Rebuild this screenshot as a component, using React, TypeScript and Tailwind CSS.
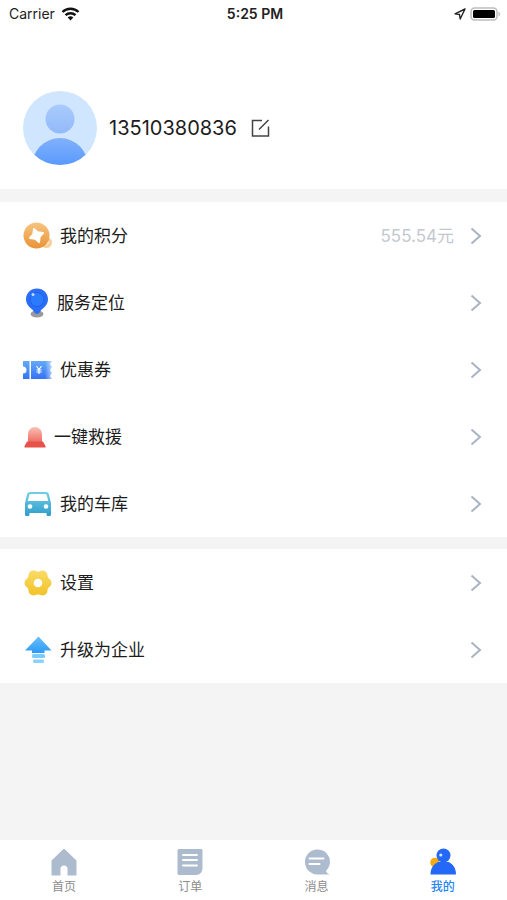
import type { ReactNode } from "react";

const CoinIcon = () => (
  <svg className="w-[29px] h-7" viewBox="0 0 29 28" aria-hidden="true">
    <defs>
      <linearGradient id="coin" x1="0" y1="0" x2="0" y2="1">
        <stop offset="0" stopColor="#f6c580" />
        <stop offset="1" stopColor="#ea9236" />
      </linearGradient>
    </defs>
    <circle cx="23.5" cy="20.5" r="5.5" fill="#f8cf98" />
    <path d="M23.5 17.5l1.2 2.2 2.3 1-2.3 1.1-1.2 2.2z" fill="#fdf0dc" />
    <circle cx="13.5" cy="13.5" r="13" fill="url(#coin)" />
    <path
      d="M11 7L14.700 10.300L20 11L16.700 14.700L16 20L12.300 16.700L7 16L10.300 12.300z"
      fill="#fff"
      stroke="#fff"
      strokeWidth="2"
      strokeLinejoin="round"
    />
  </svg>
);

const PinIcon = () => (
  <svg className="w-[26px] h-[30px]" viewBox="0 0 26 30" aria-hidden="true">
    <ellipse cx="14" cy="26" rx="6.500" ry="3.500" fill="#9a9a9d" />
    <path
      d="M14 .5C7.800.5 3 5.200 3 11.200c0 4.800 3.200 7.800 6.200 10.300 1.700 1.400 2.300 4.500 4.800 4.500s3.100-3.100 4.800-4.500C21.800 19 25 16 25 11.200 25 5.200 20.200.5 14 .5z"
      fill="#2c6df8"
    />
    <circle cx="14" cy="11.500" r="7" fill="#2a7bfd" stroke="#1f60ee" />
    <circle cx="10" cy="6.500" r="1.500" fill="#c3dcff" />
  </svg>
);

const CouponIcon = () => (
  <svg className="w-[29px] h-[18px]" viewBox="0 0 29 18" aria-hidden="true">
    <defs>
      <linearGradient id="coupon" x1="0" y1="0" x2="0" y2="1">
        <stop offset="0" stopColor="#63aaf9" />
        <stop offset="1" stopColor="#3473f7" />
      </linearGradient>
      <linearGradient id="couponEdge" x1="0" y1="0" x2="1" y2="0">
        <stop offset="0" stopColor="#fff" stopOpacity="0" />
        <stop offset="1" stopColor="#fff" stopOpacity=".6" />
      </linearGradient>
    </defs>
    <path
      d="M0 0h6.500v18H0v-5.500a3.500 3.500 0 0 0 0-7zM8 0h21l-2 3 2 3-2 3 2 3-2 3 2 3H8z"
      fill="url(#coupon)"
    />
    <path d="M22 0h7v18h-7z" fill="url(#couponEdge)" />
    <path
      d="M13.500 5l2.500 3.500L18.500 5M16 8.500V13M13.500 9h5M13.500 11h5"
      fill="none"
      stroke="#fff"
      strokeWidth="1.200"
    />
  </svg>
);

const SirenIcon = () => (
  <svg className="w-[23px] h-[22px]" viewBox="0 0 23 22" aria-hidden="true">
    <defs>
      <linearGradient id="siren" x1="0" y1="0" x2="0" y2="1">
        <stop offset="0" stopColor="#fbc1b5" />
        <stop offset="1" stopColor="#ee6d63" />
      </linearGradient>
    </defs>
    <path d="M5 16V8a7 7 0 0 1 14 0v8z" fill="url(#siren)" />
    <path d="M4 15.500h16l2.500 4.500v1.500h-21V20z" fill="#e9524b" />
  </svg>
);

const CarIcon = () => (
  <svg className="w-[29px] h-6" viewBox="0 0 29 24" aria-hidden="true">
    <defs>
      <linearGradient id="car" x1="0" y1="0" x2="0" y2="1">
        <stop offset="0" stopColor="#72cfe9" />
        <stop offset="1" stopColor="#2f9dc9" />
      </linearGradient>
    </defs>
    <path
      d="M7 0h16c1.500 0 2.500.8 2.800 2L28 11v11.500c0 .8-.5 1.500-1.300 1.500h-1.900c-.8 0-1.300-.7-1.300-1.500V21h-17v1.500c0 .8-.5 1.500-1.300 1.500H3.300C2.500 24 2 23.300 2 22.500V11L4.200 2C4.500.8 5.500 0 7 0z"
      fill="url(#car)"
    />
    <path d="M7.500 2h15c.6 0 1 .3 1.200.9L25.300 9H4.700l1.600-6.100c.2-.6.600-.9 1.200-.9z" fill="#fff" />
    <circle cx="7" cy="14.500" r="2.300" fill="#fff" />
    <circle cx="23" cy="14.500" r="2.300" fill="#fff" />
  </svg>
);

const SettingsIcon = () => (
  <svg className="w-[29px] h-[26px]" viewBox="0 0 29 26" aria-hidden="true">
    <defs>
      <linearGradient id="gear" gradientUnits="userSpaceOnUse" x1="0" y1="0" x2="0" y2="26">
        <stop offset="0" stopColor="#f9dc68" />
        <stop offset="1" stopColor="#f2c124" />
      </linearGradient>
    </defs>
    <g fill="url(#gear)">
      <circle cx="15" cy="13" r="11.500" />
      <circle cx="23.500" cy="13" r="5" />
      <circle cx="19.500" cy="5.500" r="5" />
      <circle cx="10.500" cy="5.500" r="5" />
      <circle cx="6.500" cy="13" r="5" />
      <circle cx="10.500" cy="20.500" r="5" />
      <circle cx="19.500" cy="20.500" r="5" />
    </g>
    <circle cx="15" cy="13" r="4.300" fill="#fff" />
  </svg>
);

const UpgradeIcon = () => (
  <svg className="w-[29px] h-7" viewBox="0 0 29 28" aria-hidden="true">
    <defs>
      <linearGradient id="upgrade" x1="0" y1="0" x2="0" y2="1">
        <stop offset="0" stopColor="#68bffb" />
        <stop offset="1" stopColor="#2a9bf6" />
      </linearGradient>
    </defs>
    <path d="M15.500.5L28.500 14.500H21.500V17h-12.500v-2.500H2z" fill="url(#upgrade)" />
    <rect x="9" y="18" width="13" height="4" rx="1.500" fill="#7ccbfc" />
    <rect x="10" y="23.500" width="11" height="3.500" rx="1.500" fill="#8ad2fd" />
  </svg>
);

const HomeIcon = () => (
  <svg className="w-[26px] h-7" viewBox="0 0 26 28" aria-hidden="true">
    <path
      d="M13 .5l12.500 12v15h-9V21a3.500 3.500 0 0 0-7 0v6.500H.5v-15z"
      fill="#adbbcf"
    />
  </svg>
);

const OrderIcon = () => (
  <svg className="w-[26px] h-7" viewBox="0 0 26 28" aria-hidden="true">
    <path
      d="M2 1h22c.8 0 1.500.7 1.500 1.500V20c0 4-2.500 7-6.500 7H2c-.8 0-1.500-.7-1.500-1.500v-23C.5 1.700 1.200 1 2 1z"
      fill="#adbbcf"
    />
    <path
      d="M6 7h14M6 12h14M6 17.500h14"
      stroke="#fff"
      strokeWidth="2"
      strokeLinecap="round"
    />
  </svg>
);

const MessageIcon = () => (
  <svg className="w-[26px] h-7" viewBox="0 0 26 28" aria-hidden="true">
    <path
      d="M12.500 1.500a12.300 12.300 0 1 0 2 25h11.500c-2-.5-3.500-1.700-4-3.700A12.300 12.300 0 0 0 12.500 1.500z"
      fill="#adbbcf"
    />
    <path
      d="M5.500 10.500h14M5.500 16h10"
      stroke="#fff"
      strokeWidth="2"
      strokeLinecap="round"
    />
  </svg>
);

const MineIcon = () => (
  <svg className="w-[26px] h-7" viewBox="0 0 26 28" aria-hidden="true">
    <circle cx="5" cy="14.500" r="4.800" fill="#f7ab13" />
    <circle cx="13.500" cy="7.500" r="7" fill="#2468f8" />
    <path
      d="M.5 26.500c0-6.500 3-10 7.500-12.500h10.800C23 16.500 26 20 26 26.500z"
      fill="#2468f8"
    />
    <circle cx="10.800" cy="7" r="1.600" fill="#d5e4ff" />
  </svg>
);

const Chevron = () => (
  <svg className="w-3 h-[18px]" viewBox="0 0 12 18" aria-hidden="true">
    <path d="M1.500 1.500L10 9l-8.500 7.500" fill="none" stroke="#a8b4c4" strokeWidth="2" />
  </svg>
);

const StatusBar = () => (
  <div className="grid grid-cols-3 items-center h-7 pl-[9px] pr-[6px] text-sm leading-5 text-[#222]">
    <div className="flex items-center gap-[6px]">
      <span>Carrier</span>
      <svg className="w-[19px] h-[14px]" viewBox="0 0 19 14" aria-hidden="true">
        <path
          d="M1.500 5a11.500 11.500 0 0 1 16 0M4.500 8.200a7.200 7.200 0 0 1 10 0"
          fill="none"
          stroke="#111"
          strokeWidth="2.400"
        />
        <path d="M9.500 13.500l-2.800-3a4 4 0 0 1 5.600 0z" fill="#111" />
      </svg>
    </div>
    <span className="text-center font-semibold">5:25 PM</span>
    <div className="flex items-center justify-end gap-1">
      <svg className="w-3 h-3" viewBox="0 0 12 12" aria-hidden="true">
        <path
          d="M11 1L1 5.800l4.500.7.700 4.500z"
          fill="none"
          stroke="#222"
          strokeWidth="1.400"
          strokeLinejoin="round"
        />
      </svg>
      <svg className="w-[31px] h-[14px]" viewBox="0 0 31 14" aria-hidden="true">
        <rect x="1" y="1" width="26" height="12" rx="3.500" fill="#fff" stroke="#bdbdbd" strokeWidth="1.500" />
        <rect x="3" y="3" width="22" height="8" rx="1.500" fill="#000" />
        <path d="M28.500 4.500c2 .8 2 4.200 0 5z" fill="#bdbdbd" />
      </svg>
    </div>
  </div>
);

const Avatar = () => (
  <svg className="w-[74px] h-[74px]" viewBox="0 0 74 74" role="img" aria-label="头像">
    <defs>
      <linearGradient id="head" x1="0" y1="0" x2="0" y2="1">
        <stop offset="0" stopColor="#a8cbfc" />
        <stop offset="1" stopColor="#94b9fa" />
      </linearGradient>
      <linearGradient id="body" gradientUnits="userSpaceOnUse" x1="0" y1="47" x2="0" y2="74">
        <stop offset="0" stopColor="#81b1fc" />
        <stop offset="1" stopColor="#5a9afd" />
      </linearGradient>
      <clipPath id="round">
        <circle cx="37" cy="37" r="37" />
      </clipPath>
    </defs>
    <circle cx="37" cy="37" r="37" fill="#d0e6ff" />
    <circle cx="37" cy="28" r="14.500" fill="url(#head)" />
    <circle cx="37" cy="75" r="28" fill="url(#body)" clipPath="url(#round)" />
  </svg>
);

type RowProps = {
  icon: ReactNode;
  label: string;
  value?: string;
};

const Row = ({ icon, label, value }: RowProps) => (
  <li>
    <button
      type="button"
      className="flex items-center w-full h-[67px] pl-[23px] pr-[25px] text-left text-[17px] leading-6 text-[#1c1c1c]"
    >
      {icon}
      <span className="ml-2">{label}</span>
      <span className="ml-auto mr-4 text-[#c3c8d0]">{value}</span>
      <Chevron />
    </button>
  </li>
);

const services: RowProps[] = [
  { icon: <CoinIcon />, label: "我的积分", value: "555.54元" },
  { icon: <PinIcon />, label: "服务定位" },
  { icon: <CouponIcon />, label: "优惠券" },
  { icon: <SirenIcon />, label: "一键救援" },
  { icon: <CarIcon />, label: "我的车库" },
];

const account: RowProps[] = [
  { icon: <SettingsIcon />, label: "设置" },
  { icon: <UpgradeIcon />, label: "升级为企业" },
];

const tabs = [
  { icon: <HomeIcon />, label: "首页" },
  { icon: <OrderIcon />, label: "订单" },
  { icon: <MessageIcon />, label: "消息" },
  { icon: <MineIcon />, label: "我的", active: true },
];

export default function App() {
  return (
    <div className="flex flex-col min-h-screen bg-[#f4f4f4] font-[Inter,'Noto_Sans_CJK_SC',sans-serif]">
      <header className="bg-white">
        <StatusBar />
        <div className="flex items-center pt-[63px] pb-6 pl-[23px]">
          <Avatar />
          <span className="ml-3 text-xl text-[#1c1c1c]">13510380836</span>
          <button type="button" aria-label="编辑" className="ml-[14px]">
            <svg className="w-[19px] h-[18px]" viewBox="0 0 19 18" aria-hidden="true">
              <path
                d="M11 1.500H1.500v15.500h16V7.500M8 10.500L17.500 1"
                fill="none"
                stroke="#444"
                strokeWidth="1.500"
              />
            </svg>
          </button>
        </div>
      </header>
      <main className="flex flex-col flex-1 gap-3 pt-[13px]">
        <ul className="bg-white">
          {services.map((row) => (
            <Row key={row.label} {...row} />
          ))}
        </ul>
        <ul className="bg-white">
          {account.map((row) => (
            <Row key={row.label} {...row} />
          ))}
        </ul>
      </main>
      <nav className="grid grid-cols-4 h-[60px] px-[1px] bg-white">
        {tabs.map(({ icon, label, active }) => (
          <a
            key={label}
            href="#"
            aria-current={active ? "page" : undefined}
            className={`flex flex-col items-center pt-2 text-xs leading-[21px] ${
              active ? "font-medium text-[#1f86f5]" : "text-[#8c8c8c]"
            }`}
          >
            {icon}
            {label}
          </a>
        ))}
      </nav>
    </div>
  );
}
